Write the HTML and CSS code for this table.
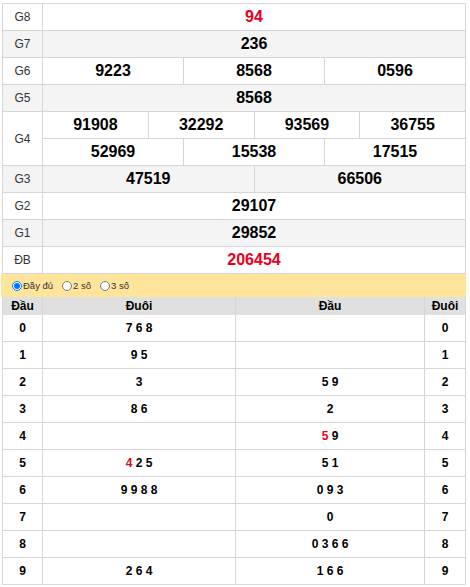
FILE: index.html
```html
<!DOCTYPE html>
<html lang="vi">
<head>
<meta charset="utf-8">
<link rel="stylesheet" href="styles.css">
</head>
<body>
<div class="page">
  <div class="prizes">
    <div class="lbl">G8</div><div class="val s12 red">94</div>
    <div class="lbl alt">G7</div><div class="val s12 alt">236</div>
    <div class="lbl">G6</div><div class="val s4">9223</div><div class="val s4">8568</div><div class="val s4">0596</div>
    <div class="lbl alt">G5</div><div class="val s12 alt">8568</div>
    <div class="lbl r2">G4</div><div class="val s3">91908</div><div class="val s3">32292</div><div class="val s3">93569</div><div class="val s3">36755</div>
    <div class="val s4">52969</div><div class="val s4">15538</div><div class="val s4">17515</div>
    <div class="lbl alt">G3</div><div class="val s6 alt">47519</div><div class="val s6 alt">66506</div>
    <div class="lbl">G2</div><div class="val s12">29107</div>
    <div class="lbl alt">G1</div><div class="val s12 alt">29852</div>
    <div class="lbl">ĐB</div><div class="val s12 red">206454</div>
  </div>
  <div class="options">
    <label class="opt"><input type="radio" name="mode" checked>Đầy đủ</label>
    <label class="opt"><input type="radio" name="mode">2 số</label>
    <label class="opt"><input type="radio" name="mode">3 số</label>
  </div>
  <div class="loto">
    <div class="hd">Đầu</div><div class="hd">Đuôi</div><div class="hd">Đầu</div><div class="hd">Đuôi</div>
    <div class="c">0</div><div class="c">7 6 8</div><div class="c"></div><div class="c">0</div>
    <div class="c">1</div><div class="c">9 5</div><div class="c"></div><div class="c">1</div>
    <div class="c">2</div><div class="c">3</div><div class="c">5 9</div><div class="c">2</div>
    <div class="c">3</div><div class="c">8 6</div><div class="c">2</div><div class="c">3</div>
    <div class="c">4</div><div class="c"></div><div class="c"><span class="red">5</span> 9</div><div class="c">4</div>
    <div class="c">5</div><div class="c"><span class="red">4</span> 2 5</div><div class="c">5 1</div><div class="c">5</div>
    <div class="c">6</div><div class="c">9 9 8 8</div><div class="c">0 9 3</div><div class="c">6</div>
    <div class="c">7</div><div class="c"></div><div class="c">0</div><div class="c">7</div>
    <div class="c">8</div><div class="c"></div><div class="c">0 3 6 6</div><div class="c">8</div>
    <div class="c">9</div><div class="c">2 6 4</div><div class="c">1 6 6</div><div class="c">9</div>
  </div>
</div>
</body>
</html>
```

FILE: styles.css
```css
html, body {
  margin: 0;
  padding: 0;
  background: #fff;
}
body {
  font-family: "Liberation Sans", Arial, sans-serif;
  color: #000;
}
.page {
  padding: 3px 0 0 2px;
  width: 464px;
}
.prizes {
  display: grid;
  grid-template-columns: 39px repeat(12, 1fr);
  grid-auto-rows: 26px;
  gap: 1px;
  background: #d6d6d6;
  border: 1px solid #d6d6d6;
}
.prizes > div {
  background: #fff;
  display: flex;
  align-items: center;
  justify-content: center;
}
.prizes > .alt {
  background: #f4f4f4;
}
.lbl {
  font-size: 12px;
  color: #333;
}
.r2 {
  grid-row: span 2;
}
.val {
  font-size: 16px;
  font-weight: bold;
}
.s12 { grid-column: span 12; }
.s6 { grid-column: span 6; }
.s4 { grid-column: span 4; }
.s3 { grid-column: span 3; }
.red {
  color: #e8001c;
}
.options {
  height: 23px;
  background: #fee59b;
  display: flex;
  align-items: center;
  padding-left: 11px;
  margin-left: -1px;
  font-size: 9.5px;
  color: #333;
}
.opt {
  display: flex;
  align-items: center;
  margin-right: 9px;
}
.opt input {
  width: 10px;
  height: 10px;
  margin: 0 1px 0 0;
}
.loto {
  display: grid;
  grid-template-columns: 39px 192px 188px 40px;
  grid-template-rows: 17px;
  grid-auto-rows: 26px;
  gap: 1px;
  background: #d6d6d6;
  border: 1px solid #d6d6d6;
  border-top: 0;
}
.loto > div {
  display: flex;
  align-items: center;
  justify-content: center;
  background: #fff;
  font-size: 12px;
  font-weight: bold;
  white-space: pre;
}
.loto > .hd {
  background: #e0e0e0;
  height: 18px;
  margin-bottom: -1px;
}
```
